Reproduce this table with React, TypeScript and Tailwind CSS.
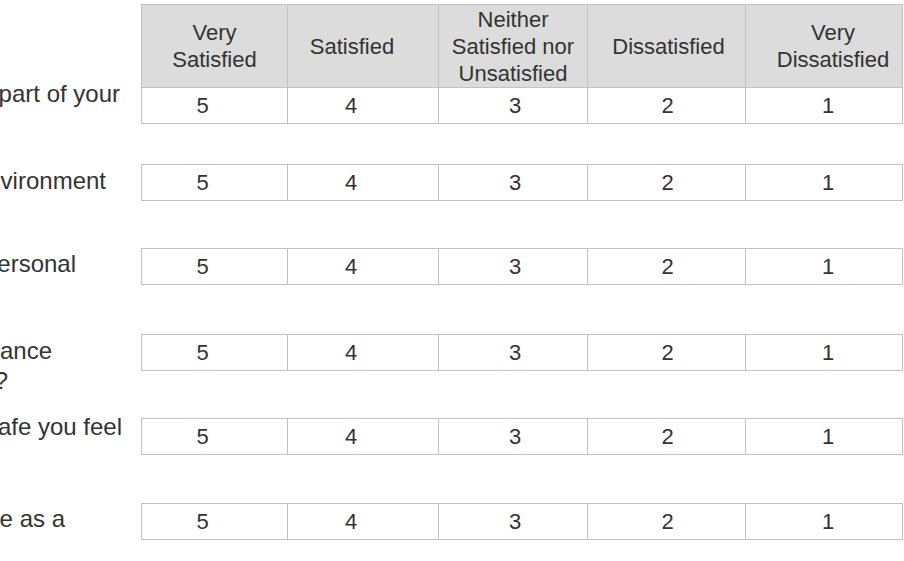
const columns = [
  { w: "w-[145px]", head: "px-2", num: "pr-[24px]", title: "Very Satisfied", value: 5 },
  { w: "w-[151px] border-l", head: "pl-0 pr-[22px]", num: "pr-[24px]", title: "Satisfied", value: 4 },
  { w: "w-[149px] border-l", head: "px-1", num: "pl-[4px]", title: "Neither Satisfied nor Unsatisfied", value: 3 },
  { w: "w-[158px] border-l", head: "pl-[4px]", num: "pl-[2px]", title: "Dissatisfied", value: 2 },
  { w: "w-[157px] border-l", head: "pl-[18px]", num: "pl-[8px]", title: "Very Dissatisfied", value: 1 },
];

// each line carries its own right inset so the visible tail lands where it does in the print
const questions = [
  {
    h: "h-[77px]",
    mt: "mt-[-8px]",
    lines: [
      { text: "How satisfied are you with feeling like a part of your", pr: "pr-[21px]" },
      { text: "school community?", pr: "pr-[240px]" },
    ],
  },
  {
    h: "h-[84px]",
    mt: "mt-[2px]",
    lines: [{ text: "How satisfied are you with your learning environment", pr: "pr-[35px]" }],
  },
  {
    h: "h-[86px]",
    mt: "mt-[1px]",
    lines: [{ text: "How satisfied are you with your personal", pr: "pr-[65px]" }],
  },
  {
    h: "h-[84px]",
    mt: "mt-[2px]",
    lines: [
      { text: "How satisfied are you with the academic guidance", pr: "pr-[89px]" },
      { text: "and support?", pr: "pr-[133px]" },
    ],
  },
  {
    h: "h-[85px]",
    mt: "mt-[-6px]",
    lines: [
      { text: "How satisfied are you with how safe you feel", pr: "pr-[19px]" },
      { text: "at school?", pr: "pr-[240px]" },
    ],
  },
  {
    h: "h-[58px]",
    mt: "mt-[1px]",
    lines: [{ text: "How satisfied are you with your life as a", pr: "pr-[76px]" }],
  },
];

function Label({ lines, mt }: { lines: { text: string; pr: string }[]; mt: string }) {
  return (
    <div className={"w-[141px] shrink-0 text-[24px] leading-[30px] " + mt}>
      {lines.map((l) => (
        <div key={l.text} className={"flex justify-end whitespace-nowrap " + l.pr}>
          <span className="shrink-0">{l.text}</span>
        </div>
      ))}
    </div>
  );
}

export default function App() {
  return (
    <div className="h-[561px] w-[904px] overflow-hidden bg-white pt-[4px] font-['Liberation_Sans',Arial,sans-serif] text-[22px] text-[#333333]">
      <div className="flex">
        <div className="w-[141px] shrink-0" />
        <div className="flex h-[83px] border border-b-0 border-[#c2c2c2] bg-[#dcdcdc]">
          {columns.map((c) => (
            <div
              key={c.title}
              className={
                "flex shrink-0 items-center justify-center border-[#c2c2c2] text-center leading-[27px] " +
                c.w +
                " " +
                c.head
              }
            >
              {c.title}
            </div>
          ))}
        </div>
      </div>

      {questions.map((q, i) => (
        <div key={i} className={"flex items-start " + q.h}>
          <Label lines={q.lines} mt={q.mt} />
          <div className="flex h-[37px] border border-[#c2c2c2] bg-white">
            {columns.map((c) => (
              <div
                key={c.title}
                className={
                  "flex shrink-0 items-center justify-center border-[#c2c2c2] " + c.w + " " + c.num
                }
              >
                {c.value}
              </div>
            ))}
          </div>
        </div>
      ))}
    </div>
  );
}
